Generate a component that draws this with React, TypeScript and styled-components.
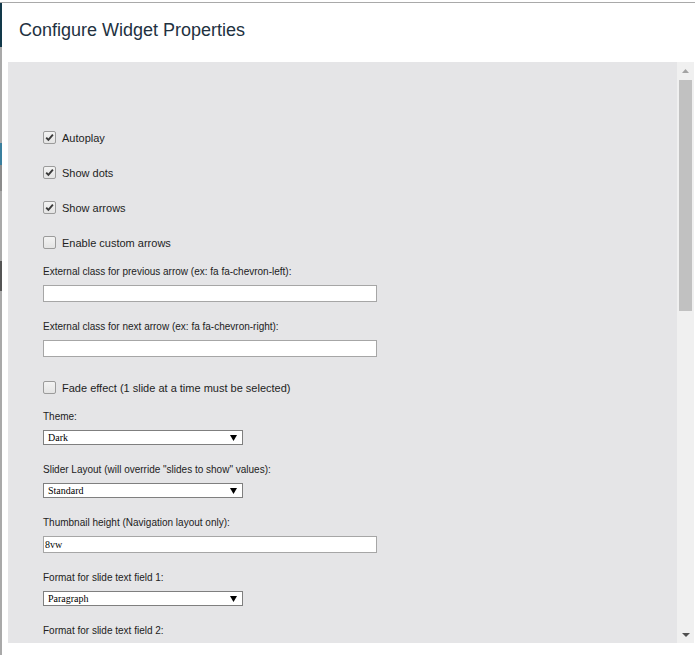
import React from 'react';
import styled, { createGlobalStyle } from 'styled-components';

const GlobalStyle = createGlobalStyle`
  html, body {
    margin: 0;
    padding: 0;
    background: #fff;
  }
  body {
    font-family: 'Liberation Sans', Arial, sans-serif;
  }
`;

const Page = styled.div`
  width: 695px;
  height: 655px;
  padding-top: 2px;
  box-sizing: border-box;
  overflow: hidden;
  background: #fff;
`;
const Frame = styled.div`
  display: flex;
  height: 653px;
  border-top: 1px solid #a9a9a9;
  box-sizing: border-box;
`;
const Backdrop = styled.div`
  width: 2px;
  flex-shrink: 0;
  background: linear-gradient(
    to bottom,
    #12394a 0,
    #12394a 44px,
    #a9a9a9 44px,
    #a9a9a9 140px,
    #3a7f9e 140px,
    #3a7f9e 162px,
    #8c8c8c 162px,
    #8c8c8c 188px,
    #a9a9a9 188px,
    #a9a9a9 258px,
    #555 258px,
    #555 288px,
    #a9a9a9 288px
  );
`;
const Modal = styled.div`
  flex: 1;
  min-width: 0;
  display: flex;
  flex-direction: column;
  background: #fff;
`;
const Header = styled.div`
  height: 59px;
  box-sizing: border-box;
  padding: 17px 17px 0;
`;
const Title = styled.h4`
  margin: 0;
  font-size: 18px;
  line-height: 20px;
  font-weight: 400;
  color: #22313f;
`;
const Body = styled.div`
  display: flex;
  height: 581px;
  margin: 0 1px 0 6px;
  background: #e5e5e7;
`;
const Content = styled.div`
  flex: 1;
  overflow: hidden;
  padding: 62px 0 0 35px;
  display: flex;
  flex-direction: column;
  align-items: flex-start;
`;
const Scrollbar = styled.div`
  width: 17px;
  flex-shrink: 0;
  background: #f0f0f0;
  display: flex;
  flex-direction: column;
`;
const ScrollButton = styled.div`
  height: 17px;
  display: flex;
  align-items: center;
  justify-content: center;
`;
const Thumb = styled.div`
  height: 231px;
  margin: 1px 2px 0;
  background: #c1c1c1;
`;
const Spacer = styled.div`
  flex: 1;
`;

const CheckRow = styled.label<{ $top: number; $bottom: number }>`
  display: flex;
  align-items: center;
  gap: 6px;
  height: 13px;
  margin: ${(p) => p.$top}px 0 ${(p) => p.$bottom}px;
  font-size: 11px;
  color: #1e1e1e;
`;
const Box = styled.span`
  width: 13px;
  height: 13px;
  box-sizing: border-box;
  border: 1px solid #9b9b9b;
  border-radius: 2px;
  background: linear-gradient(#f3f3f3, #e4e4e4);
  display: flex;
  align-items: center;
  justify-content: center;
`;

const Field = styled.div`
  display: flex;
  flex-direction: column;
  margin-bottom: 19px;
`;
const Label = styled.div`
  font-size: 10px;
  line-height: 12px;
  color: #222;
  margin-bottom: 7px;
`;
const TextInput = styled.input`
  width: 334px;
  height: 17px;
  box-sizing: border-box;
  margin: 0;
  padding: 0 1px;
  border: 1px solid #a6a6a6;
  background: #fff;
  font-family: 'Liberation Serif', 'Times New Roman', serif;
  font-size: 10px;
  color: #000;
  outline: none;
`;
const Select = styled.div`
  width: 200px;
  height: 15px;
  box-sizing: border-box;
  border: 1px solid #7f7f7f;
  background: #fff;
  display: flex;
  align-items: center;
  justify-content: space-between;
  padding: 0 5px 0 4px;
  font-family: 'Liberation Serif', 'Times New Roman', serif;
  font-size: 10px;
  color: #000;
`;

const Check: React.FC<{ checked?: boolean; top?: number; bottom?: number; label: string }> = ({
  checked,
  top = 7,
  bottom = 15,
  label
}) => (
  <CheckRow $top={top} $bottom={bottom}>
    <Box>
      {checked && (
        <svg width="9" height="9" viewBox="0 0 9 9">
          <path d="M1.2 4.6 L3.4 6.9 L7.9 1.6" fill="none" stroke="#3a3a3a" strokeWidth="1.9" />
        </svg>
      )}
    </Box>
    {label}
  </CheckRow>
);

const TextField: React.FC<{ label: string; value?: string }> = ({ label, value = '' }) => (
  <Field>
    <Label>{label}</Label>
    <TextInput defaultValue={value} />
  </Field>
);

const SelectField: React.FC<{ label: string; value?: string }> = ({ label, value }) => (
  <Field>
    <Label>{label}</Label>
    {value && (
      <Select>
        {value}
        <svg width="7" height="6" viewBox="0 0 7 6">
          <polygon points="0,0 7,0 3.5,6" fill="#000" />
        </svg>
      </Select>
    )}
  </Field>
);

const App: React.FC = () => (
  <Page>
    <GlobalStyle />
    <Frame>
      <Backdrop />
      <Modal>
        <Header>
          <Title>Configure Widget Properties</Title>
        </Header>
        <Body>
          <Content>
            <Check checked label="Autoplay" />
            <Check checked label="Show dots" />
            <Check checked label="Show arrows" />
            <Check bottom={17} label="Enable custom arrows" />
            <TextField label="External class for previous arrow (ex: fa fa-chevron-left):" />
            <TextField label="External class for next arrow (ex: fa fa-chevron-right):" />
            <Check top={5} bottom={17} label="Fade effect (1 slide at a time must be selected)" />
            <SelectField label="Theme:" value="Dark" />
            <SelectField label={'Slider Layout (will override "slides to show" values):'} value="Standard" />
            <TextField label="Thumbnail height (Navigation layout only):" value="8vw" />
            <SelectField label="Format for slide text field 1:" value="Paragraph" />
            <SelectField label="Format for slide text field 2:" />
          </Content>
          <Scrollbar>
            <ScrollButton>
              <svg width="7" height="4" viewBox="0 0 7 4">
                <polygon points="3.5,0 7,4 0,4" fill="#a3a3a3" />
              </svg>
            </ScrollButton>
            <Thumb />
            <Spacer />
            <ScrollButton>
              <svg width="8" height="4" viewBox="0 0 8 4">
                <polygon points="0,0 8,0 4,4" fill="#505050" />
              </svg>
            </ScrollButton>
          </Scrollbar>
        </Body>
      </Modal>
    </Frame>
  </Page>
);

export default App;
